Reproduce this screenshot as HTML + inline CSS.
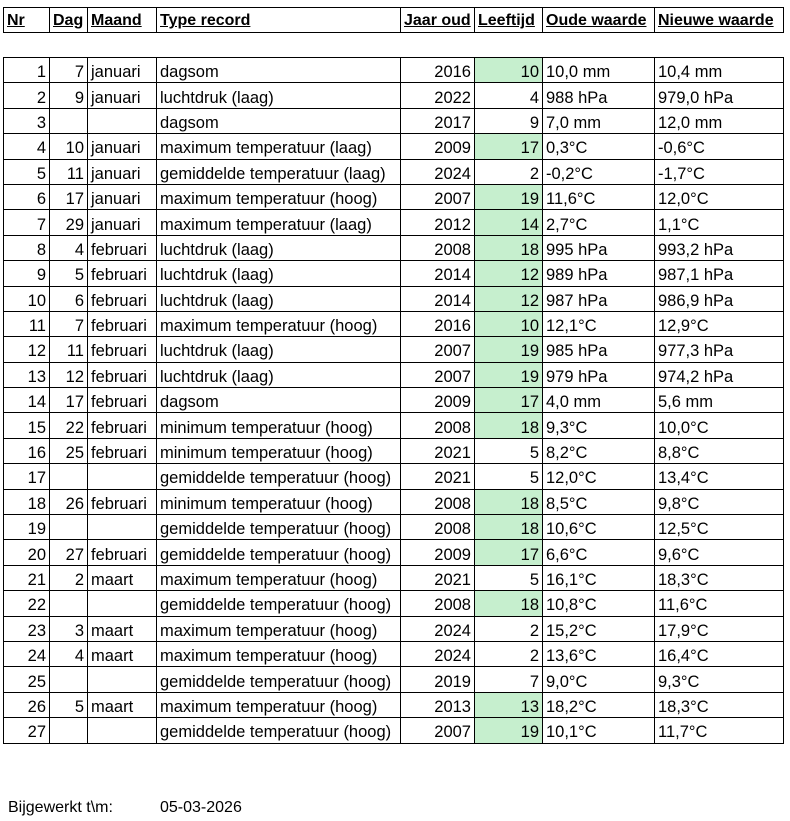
<!DOCTYPE html>
<html><head><meta charset="utf-8"><style>
body{margin:0;width:790px;height:821px;background:#fff;font-family:"Liberation Sans",Arial,sans-serif;font-size:16.5px;color:#000;position:relative;overflow:hidden}
table{border-collapse:collapse;table-layout:fixed;position:absolute;left:3px}
td{border:1px solid #000;padding:0 3px;white-space:nowrap;overflow:hidden;line-height:18px}
.h td{font-weight:bold;text-decoration:underline;height:22px;font-size:16px;padding-top:2px;padding-bottom:0}
.r{text-align:right}
.g{background:#c6efce}
#d tr{height:25.4px}
#d td{padding-top:4px;padding-bottom:0}
.f{position:absolute;top:799px;font-size:16px}
</style></head><body>
<table class="h" style="top:7px;width:781px">
<colgroup><col style="width:46px"><col style="width:38px"><col style="width:69px"><col style="width:244px"><col style="width:74px"><col style="width:68px"><col style="width:112px"><col style="width:129px"></colgroup>
<tr><td>Nr</td><td>Dag</td><td>Maand</td><td>Type record</td><td>Jaar oud</td><td>Leeftijd</td><td>Oude waarde</td><td>Nieuwe waarde</td></tr>
</table>
<table id="d" style="top:57px;width:781px">
<colgroup><col style="width:46px"><col style="width:38px"><col style="width:69px"><col style="width:244px"><col style="width:74px"><col style="width:68px"><col style="width:112px"><col style="width:129px"></colgroup>
<tr><td class="r">1</td><td class="r">7</td><td>januari</td><td>dagsom</td><td class="r">2016</td><td class="r g">10</td><td>10,0 mm</td><td>10,4 mm</td></tr>
<tr><td class="r">2</td><td class="r">9</td><td>januari</td><td>luchtdruk (laag)</td><td class="r">2022</td><td class="r">4</td><td>988 hPa</td><td>979,0 hPa</td></tr>
<tr><td class="r">3</td><td class="r"></td><td></td><td>dagsom</td><td class="r">2017</td><td class="r">9</td><td>7,0 mm</td><td>12,0 mm</td></tr>
<tr><td class="r">4</td><td class="r">10</td><td>januari</td><td>maximum temperatuur (laag)</td><td class="r">2009</td><td class="r g">17</td><td>0,3°C</td><td>-0,6°C</td></tr>
<tr><td class="r">5</td><td class="r">11</td><td>januari</td><td>gemiddelde temperatuur (laag)</td><td class="r">2024</td><td class="r">2</td><td>-0,2°C</td><td>-1,7°C</td></tr>
<tr><td class="r">6</td><td class="r">17</td><td>januari</td><td>maximum temperatuur (hoog)</td><td class="r">2007</td><td class="r g">19</td><td>11,6°C</td><td>12,0°C</td></tr>
<tr><td class="r">7</td><td class="r">29</td><td>januari</td><td>maximum temperatuur (laag)</td><td class="r">2012</td><td class="r g">14</td><td>2,7°C</td><td>1,1°C</td></tr>
<tr><td class="r">8</td><td class="r">4</td><td>februari</td><td>luchtdruk (laag)</td><td class="r">2008</td><td class="r g">18</td><td>995 hPa</td><td>993,2 hPa</td></tr>
<tr><td class="r">9</td><td class="r">5</td><td>februari</td><td>luchtdruk (laag)</td><td class="r">2014</td><td class="r g">12</td><td>989 hPa</td><td>987,1 hPa</td></tr>
<tr><td class="r">10</td><td class="r">6</td><td>februari</td><td>luchtdruk (laag)</td><td class="r">2014</td><td class="r g">12</td><td>987 hPa</td><td>986,9 hPa</td></tr>
<tr><td class="r">11</td><td class="r">7</td><td>februari</td><td>maximum temperatuur (hoog)</td><td class="r">2016</td><td class="r g">10</td><td>12,1°C</td><td>12,9°C</td></tr>
<tr><td class="r">12</td><td class="r">11</td><td>februari</td><td>luchtdruk (laag)</td><td class="r">2007</td><td class="r g">19</td><td>985 hPa</td><td>977,3 hPa</td></tr>
<tr><td class="r">13</td><td class="r">12</td><td>februari</td><td>luchtdruk (laag)</td><td class="r">2007</td><td class="r g">19</td><td>979 hPa</td><td>974,2 hPa</td></tr>
<tr><td class="r">14</td><td class="r">17</td><td>februari</td><td>dagsom</td><td class="r">2009</td><td class="r g">17</td><td>4,0 mm</td><td>5,6 mm</td></tr>
<tr><td class="r">15</td><td class="r">22</td><td>februari</td><td>minimum temperatuur (hoog)</td><td class="r">2008</td><td class="r g">18</td><td>9,3°C</td><td>10,0°C</td></tr>
<tr><td class="r">16</td><td class="r">25</td><td>februari</td><td>minimum temperatuur (hoog)</td><td class="r">2021</td><td class="r">5</td><td>8,2°C</td><td>8,8°C</td></tr>
<tr><td class="r">17</td><td class="r"></td><td></td><td>gemiddelde temperatuur (hoog)</td><td class="r">2021</td><td class="r">5</td><td>12,0°C</td><td>13,4°C</td></tr>
<tr><td class="r">18</td><td class="r">26</td><td>februari</td><td>minimum temperatuur (hoog)</td><td class="r">2008</td><td class="r g">18</td><td>8,5°C</td><td>9,8°C</td></tr>
<tr><td class="r">19</td><td class="r"></td><td></td><td>gemiddelde temperatuur (hoog)</td><td class="r">2008</td><td class="r g">18</td><td>10,6°C</td><td>12,5°C</td></tr>
<tr><td class="r">20</td><td class="r">27</td><td>februari</td><td>gemiddelde temperatuur (hoog)</td><td class="r">2009</td><td class="r g">17</td><td>6,6°C</td><td>9,6°C</td></tr>
<tr><td class="r">21</td><td class="r">2</td><td>maart</td><td>maximum temperatuur (hoog)</td><td class="r">2021</td><td class="r">5</td><td>16,1°C</td><td>18,3°C</td></tr>
<tr><td class="r">22</td><td class="r"></td><td></td><td>gemiddelde temperatuur (hoog)</td><td class="r">2008</td><td class="r g">18</td><td>10,8°C</td><td>11,6°C</td></tr>
<tr><td class="r">23</td><td class="r">3</td><td>maart</td><td>maximum temperatuur (hoog)</td><td class="r">2024</td><td class="r">2</td><td>15,2°C</td><td>17,9°C</td></tr>
<tr><td class="r">24</td><td class="r">4</td><td>maart</td><td>maximum temperatuur (hoog)</td><td class="r">2024</td><td class="r">2</td><td>13,6°C</td><td>16,4°C</td></tr>
<tr><td class="r">25</td><td class="r"></td><td></td><td>gemiddelde temperatuur (hoog)</td><td class="r">2019</td><td class="r">7</td><td>9,0°C</td><td>9,3°C</td></tr>
<tr><td class="r">26</td><td class="r">5</td><td>maart</td><td>maximum temperatuur (hoog)</td><td class="r">2013</td><td class="r g">13</td><td>18,2°C</td><td>18,3°C</td></tr>
<tr><td class="r">27</td><td class="r"></td><td></td><td>gemiddelde temperatuur (hoog)</td><td class="r">2007</td><td class="r g">19</td><td>10,1°C</td><td>11,7°C</td></tr>
</table>
<div class="f" style="left:8px">Bijgewerkt t\m:</div>
<div class="f" style="left:160px">05-03-2026</div>
</body></html>
